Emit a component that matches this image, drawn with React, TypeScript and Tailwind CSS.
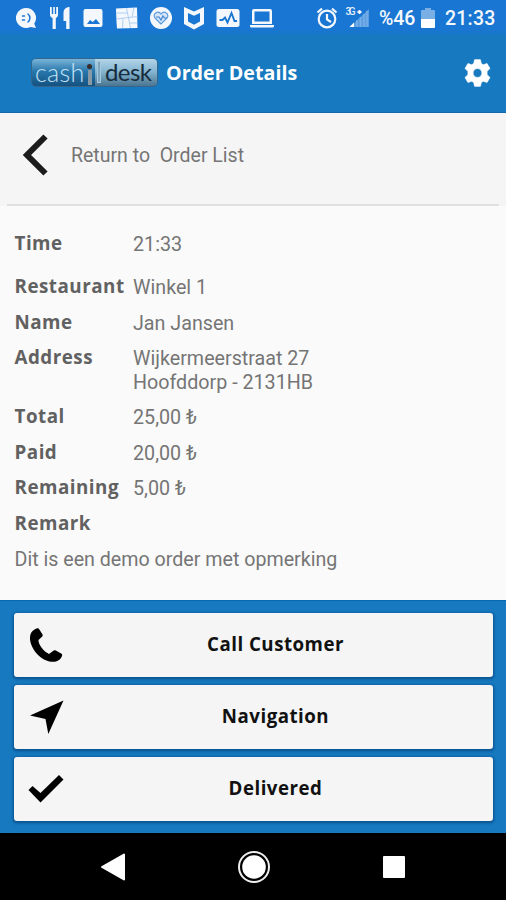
import React from "react";
import { clsx } from "clsx";

interface OrderRow {
  label: string;
  lines: string[];
  spaced?: boolean;
}

const rows: OrderRow[] = [
  { label: "Time", lines: ["21:33"], spaced: true },
  { label: "Restaurant", lines: ["Winkel 1"] },
  { label: "Name", lines: ["Jan Jansen"] },
  { label: "Address", lines: ["Wijkermeerstraat 27", "Hoofddorp - 2131HB"] },
  { label: "Total", lines: ["25,00 ₺"] },
  { label: "Paid", lines: ["20,00 ₺"] },
  { label: "Remaining", lines: ["5,00 ₺"] },
  { label: "Remark", lines: [] },
];

const StatusIcon = ({ children }: { children: React.ReactNode }) => (
  <svg width="24" height="24" viewBox="0 0 24 24" fill="#f4f8fd" className="shrink-0">
    {children}
  </svg>
);

const StatusBar = () => (
  <div className="flex h-9 shrink-0 items-center justify-between bg-[#1976d2] bg-linear-to-b from-[#1976d2] from-80% to-[#1779c4] pb-px pl-3.5 pr-[10px] text-[#f4f8fd]">
    <div className="flex items-center gap-[9.7px]">
      <StatusIcon>
        <path d="M12 2a10 10 0 1 0 4.500 18.900L22 22l-1.800-4.300A10 10 0 0 0 12 2Z" />
        <g fill="none" stroke="#1976d2" strokeWidth="1.500" strokeLinecap="round">
          <path d="M8.500 10h2M8.500 14h2M14 8c2.500 2 2.500 6 0 8" />
        </g>
      </StatusIcon>
      <StatusIcon>
        <path d="M2 1h1.800v7h1.400V1h1.600v7h1.400V1H10v7.500c0 2-1 3-2.200 3.400V23H4.600V11.900C3 11.500 2 10.300 2 8.500ZM21.500 1v22h-3.300v-8H15.500V7c0-4 3-6 6-6Z" />
      </StatusIcon>
      <StatusIcon>
        <path fillRule="evenodd" d="M4.500 3h15a2 2 0 0 1 2 2v14a2 2 0 0 1-2 2h-15a2 2 0 0 1-2-2V5a2 2 0 0 1 2-2Zm1.500 15h13l-4-5-3.200 3L9 14Z" />
      </StatusIcon>
      <StatusIcon>
        <path d="M1 2.500 11 2l11-.5.5 20.500L2 22.500 1.500 16Z" />
        <path d="M1 13 22.500 10.500M11.500 2l4 20M8 12.500 7.500 22M19 1.500l-2 9.500M2 7h10M15 17h7" fill="none" stroke="#9fc5ee" strokeWidth="0.800" />
      </StatusIcon>
      <StatusIcon>
        <circle cx="12" cy="12" r="11" />
        <path d="M12 18 6 12c-3-4 3-8 6-4 3-4 9 0 6 4Z" fill="#d6e6f7" stroke="#5c9be0" strokeWidth="1.200" />
        <path d="M7 11h3l2 3 2-4 1.500 2H18" fill="none" stroke="#3f86d4" strokeWidth="1.200" />
      </StatusIcon>
      <StatusIcon>
        <path fillRule="evenodd" d="m2 1 10 4.500L22 1v17l-10 5.500L2 18Zm4 6v8.500l6 3.300 6-3.300V7l-6 2.800Z" />
      </StatusIcon>
      <StatusIcon>
        <rect x="0.500" y="3" width="23" height="18" rx="2.500" />
        <path d="M3.500 14h3l2.500-2.500 2.500 5L15.500 7l3 8H21" fill="none" stroke="#1976d2" strokeWidth="1.900" />
      </StatusIcon>
      <StatusIcon>
        <path fillRule="evenodd" d="M4 3h16a2 2 0 0 1 2 2v13H2V5a2 2 0 0 1 2-2Zm.500 2.500v10h15v-10ZM0 19h24v1a1.500 1.500 0 0 1-1.500 1.500h-21A1.500 1.500 0 0 1 0 20Z" />
      </StatusIcon>
    </div>
    <div className="flex items-center font-[Roboto,sans-serif] text-[19.500px] font-medium">
      <svg width="22" height="24" viewBox="0 0 22 24" fill="none" stroke="#f4f8fd" strokeWidth="2.200" className="mr-[7px]">
        <circle cx="11" cy="13" r="8.300" />
        <path d="M11 8v5.500l4 2.500M1.500 6.500 6 2.700M20.500 6.500 16 2.700" />
      </svg>
      <svg width="26" height="24" viewBox="0 0 26 24" className="mr-[8px]">
        <path d="M24 3v18H5Z" fill="#5b9de0" />
        <path d="M12 14v7M15.500 11v10M19 8v13M22 5v16" stroke="#77b0e8" strokeWidth="1.500" />
        <path d="M9 16.500v4.500H4.500Z" fill="#fff" />
        <text x="0.500" y="9" fontSize="10" fontWeight="500" fill="#e3eefa" textLength="10">3G</text>
        <path d="M12.500 6h4M14.500 4v4" stroke="#f4f8fd" strokeWidth="1.800" />
      </svg>
      <span className="w-[37px] whitespace-nowrap pt-[2px] leading-6 tracking-[-0.1px]">%46</span>
      <svg width="14" height="24" viewBox="0 0 14 24" className="ml-[5px] mr-[10px]">
        <path d="M4 2h6v2h3a1 1 0 0 1 1 1v8H0V5a1 1 0 0 1 1-1h3Z" fill="#79afe5" />
        <path d="M0 13h14v8a1 1 0 0 1-1 1H1a1 1 0 0 1-1-1Z" fill="#fff" />
      </svg>
      <span className="w-[51px] pt-[2px] leading-6 tracking-[0.2px]">21:33</span>
    </div>
  </div>
);

const Logo = () => (
  <div className="flex h-[29px] w-[127px] overflow-hidden rounded-[5px] border border-[#35668b] font-[Lato,sans-serif] text-[25px] leading-[26px]">
    <div className="flex w-[63px] bg-linear-to-b from-[#78b4d8] via-[#2878ad] via-45% to-[#155280] pl-[3px] text-[#c4e2f5]">
      <span className="w-[50px] font-light tracking-[0.3px]">cash</span>
      <div className="ml-[2px] mt-[5px] flex w-[5px] flex-col items-center gap-px">
        <div className="size-[5px] rounded-full bg-[#392d2d]" />
        <div className="h-[15px] w-1 bg-[#899aa5]" />
      </div>
    </div>
    <div className="flex flex-1 bg-linear-to-b from-[#b2d5e9] via-[#81b2ce] via-50% to-[#4b7590] text-[#172c3c]">
      <div className="ml-[2px] mr-[4px] mt-[2px] h-[22px] w-1 border border-[#a7c8db] bg-[#7da5bf]" />
      <span className="text-[24px] font-normal tracking-[-0.6px]">desk</span>
    </div>
  </div>
);

const Header = () => (
  <header className="flex h-[77px] shrink-0 items-center border-b border-[#126aae] bg-[#1779bf] pb-[3px] pl-[31px] pr-[14px]">
    <Logo />
    <h1 className="ml-2 flex-1 font-['Open_Sans',sans-serif] text-[19.700px] font-bold text-white">Order Details</h1>
    <svg width="29" height="30" viewBox="0 0 24 24" fill="#fff" className="mt-px">
      <path
        fillRule="evenodd"
        d="M9.600 1h4.800l.7 3.200 1.700 1 3.100-1 2.400 4.100-2.400 2.300v2.800l2.400 2.300-2.400 4.100-3.100-1-1.700 1-.7 3.200H9.600l-.7-3.200-1.700-1-3.100 1-2.400-4.100 2.400-2.300v-2.800L1.700 8.300l2.400-4.100 3.100 1 1.700-1ZM12 8.300a3.700 3.700 0 1 0 0 7.400 3.700 3.700 0 0 0 0-7.400Z"
        stroke="#fff"
        strokeWidth="0.600"
        strokeLinejoin="round"
      />
    </svg>
  </header>
);

const ReturnBar = () => (
  <div className="flex h-[93px] shrink-0 flex-col bg-[#f5f5f5]">
    <button className="flex flex-1 items-center pb-[7px] pl-[22px] text-left">
      <svg width="28" height="42" viewBox="0 0 28 42" fill="none" stroke="#1c1c1c" strokeWidth="6">
        <path d="M23.500 2.500 5 21 23.500 39.500" />
      </svg>
      <span className="ml-[21px] whitespace-pre pt-[2px] font-[Roboto,sans-serif] text-[19.500px] text-[#757575]">
        Return to{"  "}Order List
      </span>
    </button>
    <div className="mx-[7px] h-[2px] bg-[#e0e0e0]" />
  </div>
);

const OrderDetails = () => (
  <main className="flex flex-1 flex-col bg-[#fafafa] pl-[14.500px] leading-[23.300px]">
    {rows.map((row) => (
      <div key={row.label} className={clsx("flex", row.spaced ? "pb-[13.500px] pt-[25.600px]" : "pb-[5.100px] pt-[6.100px]")}>
        <div className="w-[118.500px] shrink-0 font-['Open_Sans',sans-serif] text-[18.800px] font-bold tracking-[0.500px] text-[#616161]">
          {row.label}
        </div>
        <div className="pt-px font-[Roboto,sans-serif] text-[19.700px] text-[#757575]">
          {row.lines.map((line) => (
            <div key={line}>{line}</div>
          ))}
        </div>
      </div>
    ))}
    <p className="pt-[7.500px] font-[Roboto,sans-serif] text-[19.650px] text-[#757575]">
      Dit is een demo order met opmerking
    </p>
  </main>
);

const ActionButton = ({ label, children }: { label: string; children: React.ReactNode }) => (
  <button className="flex h-16 items-center rounded-[3px] bg-[#f5f5f5] pl-[14px] pr-[6px] shadow-[0_1px_3px_1px_#07508f]">
    <svg width="36" height="36" viewBox="0 0 36 36" fill="#000">
      {children}
    </svg>
    <span className="flex-1 pb-px text-center font-['Open_Sans',sans-serif] text-[18.700px] font-bold tracking-[0.500px] text-[#111]">
      {label}
    </span>
  </button>
);

const Actions = () => (
  <div className="flex h-[233px] shrink-0 flex-col gap-2 border-t border-[#0867ad] bg-[#1779bf] pl-[14px] pr-[13px] pt-[12px]">
    <ActionButton label="Call Customer">
      <path d="M6.500 2.500 9 1.300c1-.4 1.800.1 2.200.9l3.200 5.100c.6 1 .3 1.800-.4 2.500l-3.500 3.300c-.3 4.500 5.300 11.500 10.500 14l4-3.200c.9-.7 1.800-.9 2.800-.4l5.400 3c1 .6 1.200 1.500.8 2.500-1.500 4.200-5.500 6.300-10.500 5.800C12 33.700 1.500 20.500 2 10.500c.1-3.500 1.500-6.500 4.500-8Z" />
    </ActionButton>
    <ActionButton label="Navigation">
      <path d="M35.500 1.500 20.300 35 17.500 20 2 16.500Z" />
    </ActionButton>
    <ActionButton label="Delivered">
      <path d="m4.500 15 8 7L31 4l4.500 4.500L12.500 31.500.500 19Z" />
    </ActionButton>
  </div>
);

const NavigationBar = () => (
  <nav className="flex h-[67px] shrink-0 items-center justify-between bg-black pl-[100px] pr-[101px]">
    <svg width="26" height="30" viewBox="0 0 26 30" fill="#fff" stroke="#fff" strokeWidth="2" strokeLinejoin="round">
      <path d="M24 2.500v25L2 15Z" />
    </svg>
    <svg width="34" height="34" viewBox="0 0 34 34" fill="#fff" className="mr-px">
      <circle cx="17" cy="17" r="15" fill="none" stroke="#eee" strokeWidth="2" />
      <circle cx="17" cy="17" r="11.800" />
    </svg>
    <div className="size-[22px] rounded-[1px] bg-white" />
  </nav>
);

export default function App() {
  return (
    <div className="flex h-[900px] w-[506px] flex-col overflow-hidden">
      <StatusBar />
      <Header />
      <ReturnBar />
      <OrderDetails />
      <Actions />
      <NavigationBar />
    </div>
  );
}
